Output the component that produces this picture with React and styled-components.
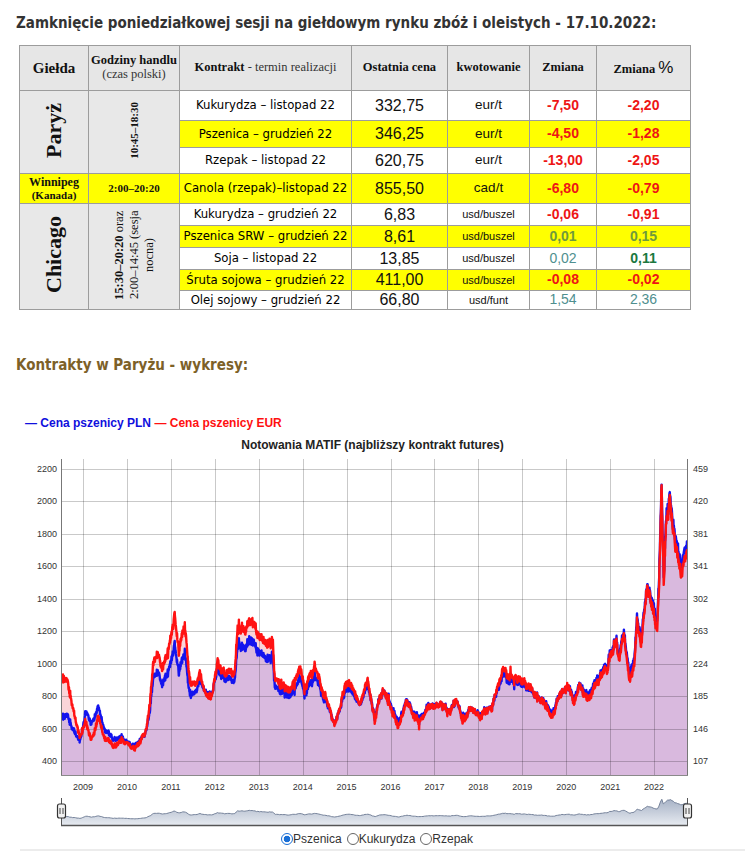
import React, { useMemo } from 'react';
import styled, { createGlobalStyle } from 'styled-components';

const GlobalStyle = createGlobalStyle`
  html, body {
    margin: 0;
    padding: 0;
    background: #fff;
  }
  body {
    font-family: "Liberation Sans", Arial, sans-serif;
    color: #222;
  }
`;

const TONES = {
    down: { color: '#ee1515', weight: 700 },
    olive: { color: '#6f9a3c', weight: 700 },
    teal: { color: '#4f8f8f', weight: 400 },
    green: { color: '#1b7840', weight: 700 },
};

const MARKETS = [
    {
        name: 'Paryż',
        vertical: true,
        hours: <b>10:45–18:30</b>,
        rows: [
            { contract: 'Kukurydza – listopad 22', price: '332,75', unit: 'eur/t', change: ['-7,50', 'down'], pct: ['-2,20', 'down'], h: 30 },
            { contract: 'Pszenica – grudzień 22', price: '346,25', unit: 'eur/t', change: ['-4,50', 'down'], pct: ['-1,28', 'down'], h: 27, hl: true },
            { contract: 'Rzepak – listopad 22', price: '620,75', unit: 'eur/t', change: ['-13,00', 'down'], pct: ['-2,05', 'down'], h: 26 },
        ],
    },
    {
        name: 'Winnipeg',
        sub: '(Kanada)',
        hl: true,
        hours: '2:00–20:20',
        rows: [
            { contract: 'Canola (rzepak)–listopad 22', price: '855,50', unit: 'cad/t', change: ['-6,80', 'down'], pct: ['-0,79', 'down'], h: 30, hl: true },
        ],
    },
    {
        name: 'Chicago',
        vertical: true,
        hours: (
            <>
                <b>15:30–20:20</b> oraz 2:00–14:45 (sesja nocna)
            </>
        ),
        rows: [
            { contract: 'Kukurydza – grudzień 22', price: '6,83', unit: 'usd/buszel', change: ['-0,06', 'down'], pct: ['-0,91', 'down'], h: 22 },
            { contract: 'Pszenica SRW – grudzień 22', price: '8,61', unit: 'usd/buszel', change: ['0,01', 'olive'], pct: ['0,15', 'olive'], h: 22, hl: true },
            { contract: 'Soja – listopad 22', price: '13,85', unit: 'usd/buszel', change: ['0,02', 'teal'], pct: ['0,11', 'green'], h: 22 },
            { contract: 'Śruta sojowa – grudzień 22', price: '411,00', unit: 'usd/buszel', change: ['-0,08', 'down'], pct: ['-0,02', 'down'], h: 21, hl: true },
            { contract: 'Olej sojowy – grudzień 22', price: '66,80', unit: 'usd/funt', change: ['1,54', 'teal'], pct: ['2,36', 'teal'], h: 19 },
        ],
    },
];

// EUR price of the nearest MATIF wheat contract, read off the published chart
const EUR_KEYS = [
    [2008.5, 206], [2008.64, 201], [2008.93, 133], [2009.05, 153], [2009.2, 133], [2009.34, 158],
    [2009.5, 137], [2009.68, 125], [2009.89, 133], [2010.18, 121], [2010.41, 141], [2010.52, 173],
    [2010.59, 221], [2010.7, 234], [2010.8, 213], [2010.93, 242], [2011.09, 284], [2011.18, 242],
    [2011.32, 266], [2011.43, 201], [2011.55, 197], [2011.66, 213], [2011.77, 189], [2011.93, 185],
    [2012.07, 225], [2012.23, 213], [2012.34, 221], [2012.45, 209], [2012.52, 270], [2012.73, 266],
    [2012.86, 279], [2013.02, 258], [2013.2, 249], [2013.32, 252], [2013.36, 209], [2013.59, 194],
    [2013.75, 197], [2013.93, 218], [2014.05, 197], [2014.27, 221], [2014.43, 194], [2014.57, 177],
    [2014.73, 149], [2014.95, 197], [2015.02, 201], [2015.18, 194], [2015.3, 177], [2015.48, 206],
    [2015.64, 153], [2015.75, 182], [2015.82, 189], [2015.98, 177], [2016.16, 149], [2016.36, 177],
    [2016.66, 153], [2016.89, 173], [2017.16, 177], [2017.34, 165], [2017.5, 183], [2017.64, 153],
    [2017.8, 170], [2018.02, 161], [2018.3, 170], [2018.43, 194], [2018.59, 218], [2018.7, 206],
    [2018.98, 207], [2019.09, 197], [2019.32, 185], [2019.45, 182], [2019.66, 158], [2019.84, 185],
    [2020.07, 197], [2020.18, 177], [2020.3, 201], [2020.45, 182], [2020.59, 189], [2020.8, 213],
    [2020.93, 218], [2021.02, 237], [2021.14, 249], [2021.2, 225], [2021.32, 258], [2021.43, 201],
    [2021.55, 225], [2021.61, 273], [2021.7, 249], [2021.84, 314], [2022.0, 285], [2022.07, 266],
    [2022.11, 314], [2022.17, 435], [2022.22, 314], [2022.27, 394], [2022.32, 411], [2022.36, 438],
    [2022.41, 394], [2022.5, 358], [2022.61, 330], [2022.68, 346], [2022.78, 358],
];

// EUR/PLN exchange rate used to get the PLN price
const RATE_KEYS = [
    [2008.5, 3.22], [2008.75, 3.45], [2008.93, 3.85], [2009.1, 4.7], [2009.2, 4.75], [2009.5, 4.4],
    [2010, 4.05], [2010.6, 4.05], [2011, 3.95], [2011.4, 3.95], [2011.8, 4.4], [2012.1, 4.3],
    [2012.6, 4.15], [2013, 4.15], [2014, 4.18], [2015, 4.2], [2016, 4.35], [2017, 4.28],
    [2018, 4.25], [2019, 4.3], [2020, 4.35], [2020.5, 4.45], [2021, 4.55], [2021.9, 4.68],
    [2022.2, 4.82], [2022.8, 4.85],
];

const PLOT = { left: 61, right: 688, top: 6, bottom: 323 };
const NAV = { top: 345, bottom: 372 };
const YEARS = [2009, 2010, 2011, 2012, 2013, 2014, 2015, 2016, 2017, 2018, 2019, 2020, 2021, 2022];
const PLN_TICKS = [400, 600, 800, 1000, 1200, 1400, 1600, 1800, 2000, 2200];
const EUR_TICKS = [107, 146, 185, 224, 263, 302, 341, 381, 420, 459];

const xOf = (t) => 83 + (t - 2009) * 43.93;
const yPln = (v) => 308 - ((v - 400) / 1800) * 292;
const yNav = (v) => NAV.bottom - (v / 2150) * (NAV.bottom - NAV.top);
const eurToPx = (v) => 308 - ((v - 107) / 352) * 292;

function mulberry32(a) {
    return function () {
        a |= 0;
        a = (a + 0x6d2b79f5) | 0;
        let t = Math.imul(a ^ (a >>> 15), 1 | a);
        t = (t + Math.imul(t ^ (t >>> 7), 61 | t)) ^ t;
        return ((t ^ (t >>> 14)) >>> 0) / 4294967296;
    };
}

function lerp(keys, t) {
    if (t <= keys[0][0]) return keys[0][1];
    for (let i = 1; i < keys.length; i++) {
        if (t <= keys[i][0]) {
            const [t0, v0] = keys[i - 1];
            const [t1, v1] = keys[i];
            return v0 + ((v1 - v0) * (t - t0)) / (t1 - t0);
        }
    }
    return keys[keys.length - 1][1];
}

function buildSeries() {
    const rnd = mulberry32(20221017);
    const start = 2008.5;
    const end = 2022.78;
    const n = 2600;
    const out = [];
    let drift = 0;
    for (let i = 0; i <= n; i++) {
        const t = start + ((end - start) * i) / n;
        drift = drift * 0.88 + (rnd() - 0.5) * 0.018;
        const spike = rnd() < 0.012 ? (rnd() - 0.5) * 0.09 : 0;
        const eur = lerp(EUR_KEYS, t) * (1 + drift + spike + (rnd() - 0.5) * 0.034);
        const pln = eur * lerp(RATE_KEYS, t) * (1 + (rnd() - 0.5) * 0.018);
        out.push({ t, eur, pln });
    }
    return out;
}

const linePath = (pts) => pts.map((p, i) => `${i ? 'L' : 'M'}${p[0].toFixed(1)} ${p[1].toFixed(1)}`).join('');
const areaPath = (pts, base) =>
    `${linePath(pts)}L${pts[pts.length - 1][0].toFixed(1)} ${base}L${pts[0][0].toFixed(1)} ${base}Z`;

function NavHandle({ x }) {
    return (
        <g>
            <line x1={x} y1={NAV.top} x2={x} y2={NAV.bottom} stroke="#555" />
            <rect x={x - 4} y={351} width={8} height={14} rx={2} fill="#f2f2f2" stroke="#333" strokeWidth={1.2} />
            <line x1={x - 1.5} y1={355} x2={x - 1.5} y2={361} stroke="#444" />
            <line x1={x + 1.5} y1={355} x2={x + 1.5} y2={361} stroke="#444" />
        </g>
    );
}

function PriceChart() {
    const paths = useMemo(() => {
        const series = buildSeries();
        const eur = series.map((d) => [xOf(d.t), eurToPx(d.eur)]);
        const pln = series.map((d) => [xOf(d.t), yPln(d.pln)]);
        const nav = series.filter((_, i) => i % 6 === 0).map((d) => [xOf(d.t), yNav(d.pln)]);
        return {
            eurLine: linePath(eur),
            eurArea: areaPath(eur, PLOT.bottom),
            plnLine: linePath(pln),
            plnArea: areaPath(pln, PLOT.bottom),
            navLine: linePath(nav),
            navArea: areaPath(nav, NAV.bottom),
        };
    }, []);

    return (
        <ChartSvg width="745" height="378" viewBox="0 0 745 378">
            <defs>
                <clipPath id="plotClip">
                    <rect x={PLOT.left} y={PLOT.top} width={PLOT.right - PLOT.left} height={PLOT.bottom - PLOT.top} />
                </clipPath>
                <clipPath id="navClip">
                    <rect x={PLOT.left} y={NAV.top - 2} width={PLOT.right - PLOT.left} height={NAV.bottom - NAV.top + 2} />
                </clipPath>
                <linearGradient id="navFill" x1="0" y1="0" x2="0" y2="1">
                    <stop offset="0" stopColor="#a7b2c6" />
                    <stop offset="1" stopColor="#e6eaf0" />
                </linearGradient>
            </defs>

            <g clipPath="url(#plotClip)">
                <path d={paths.eurArea} fill="#fad4d8" />
                <path d={paths.plnArea} fill="#d9b9de" />
            </g>

            <g stroke="rgba(0,0,0,0.21)" strokeWidth="1">
                {PLN_TICKS.map((v) => (
                    <line key={v} x1={PLOT.left} x2={PLOT.right} y1={Math.round(yPln(v)) + 0.5} y2={Math.round(yPln(v)) + 0.5} />
                ))}
                {YEARS.map((y) => (
                    <line key={y} x1={Math.round(xOf(y)) + 0.5} x2={Math.round(xOf(y)) + 0.5} y1={PLOT.top} y2={PLOT.bottom} />
                ))}
            </g>

            <g clipPath="url(#plotClip)" fill="none" strokeLinejoin="round">
                <path d={paths.plnLine} stroke="#1414ee" strokeWidth="2.4" />
                <path d={paths.eurLine} stroke="#ff1212" strokeWidth="2.4" />
            </g>

            <g stroke="#777" strokeWidth="1">
                <line x1={PLOT.left + 0.5} x2={PLOT.left + 0.5} y1={PLOT.top} y2={PLOT.bottom} />
                <line x1={PLOT.right - 0.5} x2={PLOT.right - 0.5} y1={PLOT.top} y2={PLOT.bottom} />
                <line x1={PLOT.left} x2={PLOT.right} y1={PLOT.bottom - 0.5} y2={PLOT.bottom - 0.5} stroke="#8a8a8a" />
            </g>

            <g fontFamily='"Liberation Sans", Arial, sans-serif' fontSize="9" fill="#333">
                {PLN_TICKS.map((v) => (
                    <text key={v} x={57} y={yPln(v) + 3} textAnchor="end">
                        {v}
                    </text>
                ))}
                {EUR_TICKS.map((v, i) => (
                    <text key={v} x={693} y={yPln(PLN_TICKS[i]) + 3}>
                        {v}
                    </text>
                ))}
                {YEARS.map((y) => (
                    <text key={y} x={xOf(y)} y={337} textAnchor="middle">
                        {y}
                    </text>
                ))}
            </g>

            <g clipPath="url(#navClip)">
                <path d={paths.navArea} fill="url(#navFill)" />
                <path d={paths.navLine} fill="none" stroke="#75829a" strokeWidth="1" />
            </g>
            <line x1={PLOT.left} x2={PLOT.right} y1={NAV.bottom + 0.5} y2={NAV.bottom + 0.5} stroke="#555" strokeWidth="1.5" />
            <NavHandle x={PLOT.left + 0.5} />
            <NavHandle x={PLOT.right - 0.5} />
        </ChartSvg>
    );
}

export default function App() {
    return (
        <Page>
            <GlobalStyle />
            <Title>Zamknięcie poniedziałkowej sesji na giełdowym rynku zbóż i oleistych - 17.10.2022:</Title>

            <Table>
                <colgroup>
                    <col style={{ width: 69 }} />
                    <col style={{ width: 91 }} />
                    <col style={{ width: 172 }} />
                    <col style={{ width: 96 }} />
                    <col style={{ width: 82 }} />
                    <col style={{ width: 67 }} />
                    <col style={{ width: 94 }} />
                </colgroup>
                <thead>
                    <Row $h={45}>
                        <Head $size={15}>Giełda</Head>
                        <Head>
                            Godziny handlu
                            <br />
                            <Light>(czas polski)</Light>
                        </Head>
                        <Head>
                            Kontrakt <Light>- termin realizacji</Light>
                        </Head>
                        <Head>Ostatnia cena</Head>
                        <Head>kwotowanie</Head>
                        <Head>Zmiana</Head>
                        <Head>
                            Zmiana <Percent>%</Percent>
                        </Head>
                    </Row>
                </thead>
                <tbody>
                    {MARKETS.map((market) =>
                        market.rows.map((row, i) => (
                            <Row key={row.contract} $h={row.h}>
                                {i === 0 && (
                                    <>
                                        <MarketCell rowSpan={market.rows.length} $hl={market.hl}>
                                            {market.vertical ? (
                                                <Vertical $size={22} $bold>
                                                    {market.name}
                                                </Vertical>
                                            ) : (
                                                <>
                                                    <MarketName>{market.name}</MarketName>
                                                    <MarketSub>{market.sub}</MarketSub>
                                                </>
                                            )}
                                        </MarketCell>
                                        <MarketCell rowSpan={market.rows.length} $hl={market.hl}>
                                            {market.vertical ? (
                                                <Vertical
                                                    $size={market.rows.length > 3 ? 12.5 : 11}
                                                    $span={market.rows.length > 3 ? 100 : null}
                                                >
                                                    {market.hours}
                                                </Vertical>
                                            ) : (
                                                <Hours>{market.hours}</Hours>
                                            )}
                                        </MarketCell>
                                    </>
                                )}
                                <ContractCell $hl={row.hl}>{row.contract}</ContractCell>
                                <PriceCell $hl={row.hl}>{row.price}</PriceCell>
                                <UnitCell $hl={row.hl} $small={row.unit.startsWith('usd')}>
                                    {row.unit}
                                </UnitCell>
                                <ChangeCell $hl={row.hl} $tone={row.change[1]}>
                                    {row.change[0]}
                                </ChangeCell>
                                <ChangeCell $hl={row.hl} $tone={row.pct[1]}>
                                    {row.pct[0]}
                                </ChangeCell>
                            </Row>
                        ))
                    )}
                </tbody>
            </Table>

            <Section>Kontrakty w Paryżu - wykresy:</Section>

            <Legend>
                <LegendItem $color="#1010dd">— Cena pszenicy PLN</LegendItem>{' '}
                <LegendItem $color="#ff1010">— Cena pszenicy EUR</LegendItem>
            </Legend>
            <ChartTitle>Notowania MATIF (najbliższy kontrakt futures)</ChartTitle>
            <PriceChart />

            <Choices>
                <Choice>
                    <Radio type="radio" name="commodity" defaultChecked />
                    Pszenica
                </Choice>
                <Choice>
                    <Radio type="radio" name="commodity" />
                    Kukurydza
                </Choice>
                <Choice>
                    <Radio type="radio" name="commodity" />
                    Rzepak
                </Choice>
            </Choices>
            <Footer />
        </Page>
    );
}

const Page = styled.div`
    width: 745px;
    min-height: 851px;
    overflow: hidden;
`;

const Title = styled.h2`
    margin: 13px 0 0 16px;
    font-family: "DejaVu Sans Condensed", "DejaVu Sans", sans-serif;
    font-size: 15px;
    line-height: 20px;
    font-weight: 700;
    color: #333;
    white-space: nowrap;
`;

const Table = styled.table`
    margin: 12px 0 0 19px;
    width: 671px;
    table-layout: fixed;
    border-collapse: collapse;
    font-family: "Liberation Serif", "Times New Roman", serif;

    td,
    th {
        border: 1px solid #9c9c9c;
        padding: 0 2px;
        text-align: center;
        vertical-align: middle;
        line-height: 1.1;
    }
`;

const Row = styled.tr`
    height: ${(p) => p.$h}px;
`;

const Head = styled.th`
    background: #e6e6e6;
    font-size: ${(p) => p.$size || 12.5}px;
    font-weight: 700;
    color: #111;
`;

const Light = styled.span`
    font-weight: 400;
    color: #333;
`;

const Percent = styled.span`
    font-family: "Liberation Sans", Arial, sans-serif;
    font-size: 17px;
    font-weight: 400;
`;

const MarketCell = styled.td`
    background: ${(p) => (p.$hl ? '#ffff00' : '#e8e8e8')};
    color: #111;
`;

const Vertical = styled.div`
    display: inline-block;
    writing-mode: vertical-rl;
    transform: rotate(180deg);
    font-size: ${(p) => p.$size}px;
    font-weight: ${(p) => (p.$bold ? 700 : 400)};
    line-height: ${(p) => (p.$span ? '15px' : 1.1)};
    ${(p) => p.$span && `height: ${p.$span}px;`}
    text-align: center;
`;

const MarketName = styled.div`
    font-size: 12px;
    font-weight: 700;
`;

const MarketSub = styled.div`
    font-size: 11px;
    font-weight: 700;
`;

const Hours = styled.div`
    font-size: 11px;
    font-weight: 700;
`;

const BodyCell = styled.td`
    background: ${(p) => (p.$hl ? '#ffff00' : '#fff')};
`;

const ContractCell = styled(BodyCell)`
    font-family: "DejaVu Sans Condensed", "DejaVu Sans", sans-serif;
    font-size: 13px;
    color: #000;
    white-space: nowrap;
    overflow: hidden;
`;

const PriceCell = styled(BodyCell)`
    font-family: "Liberation Sans", Arial, sans-serif;
    font-size: 16px;
    color: #111;
`;

const UnitCell = styled(BodyCell)`
    font-family: "Liberation Sans", Arial, sans-serif;
    font-size: ${(p) => (p.$small ? 11 : 13.5)}px;
    color: #111;
`;

const ChangeCell = styled(BodyCell)`
    font-family: "Liberation Sans", Arial, sans-serif;
    font-size: 14px;
    font-weight: ${(p) => TONES[p.$tone].weight};
    color: ${(p) => TONES[p.$tone].color};
`;

const Section = styled.h3`
    margin: 45px 0 0 16px;
    font-family: "DejaVu Sans Condensed", "DejaVu Sans", sans-serif;
    font-size: 15px;
    line-height: 20px;
    font-weight: 700;
    color: #7d6128;
`;

const Legend = styled.div`
    margin: 41px 0 0 25px;
    font-size: 12px;
    line-height: 15px;
    font-weight: 700;
`;

const LegendItem = styled.span`
    color: ${(p) => p.$color};
`;

const ChartTitle = styled.div`
    margin-top: 7px;
    text-align: center;
    font-size: 12px;
    line-height: 15px;
    font-weight: 700;
    color: #222;
`;

const ChartSvg = styled.svg`
    display: block;
`;

const Choices = styled.div`
    display: flex;
    justify-content: center;
    align-items: center;
    gap: 5px;
    padding-left: 9px;
    height: 16px;
    font-size: 12px;
    color: #333;
`;

const Choice = styled.label`
    display: flex;
    align-items: center;
`;

const Radio = styled.input`
    appearance: none;
    margin: 0;
    width: 12px;
    height: 12px;
    border: 1.5px solid #666;
    border-radius: 50%;
    background: #fff;

    &:checked {
        border-color: #1a6fd6;
        background: radial-gradient(circle, #1a6fd6 0 3px, #fff 3.6px);
    }
`;

const Footer = styled.div`
    margin: 2px 0 0 20px;
    height: 3px;
    background: #ececec;
`;
